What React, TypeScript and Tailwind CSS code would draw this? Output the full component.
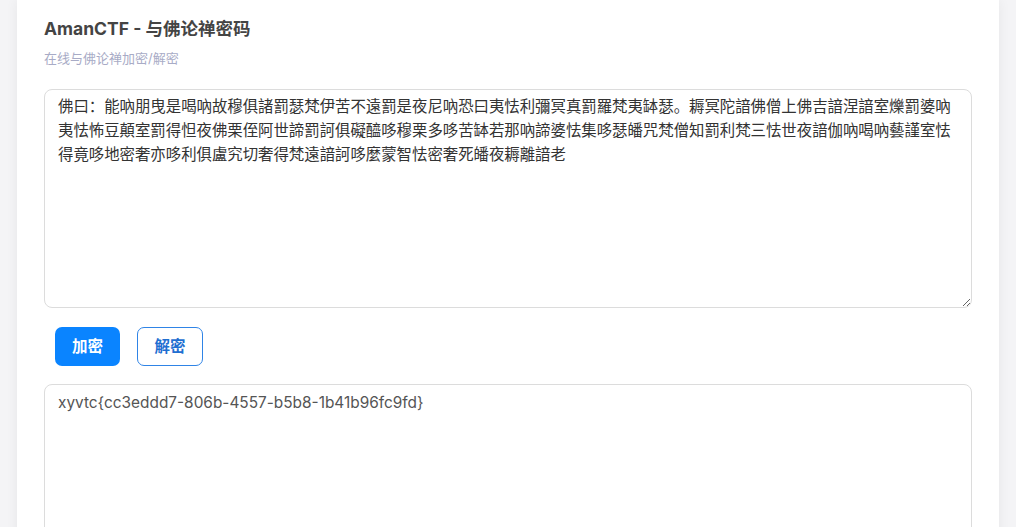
import { useState } from "react";

const CIPHER =
  "佛曰：能吶朋曳是喝吶故穆俱諸罰瑟梵伊苦不遠罰是夜尼吶恐曰夷怯利彌冥真罰羅梵夷缽瑟。耨冥陀諳佛僧上佛吉諳涅諳室爍罰婆吶夷怯怖豆顛室罰得怛夜佛栗侄阿世諦罰訶俱礙醯哆穆栗多哆苦缽若那吶諦婆怯集哆瑟皤咒梵僧知罰利梵三怯世夜諳伽吶喝吶藝謹室怯得竟哆地密奢亦哆利俱盧究切奢得梵遠諳訶哆麼蒙智怯密奢死皤夜耨離諳老";

const FONT = "font-['Inter','Noto_Sans_CJK_SC',sans-serif]";

export default function App() {
  const [input, setInput] = useState(CIPHER);
  const [output, setOutput] = useState("xyvtc{cc3eddd7-806b-4557-b5b8-1b41b96fc9fd}");

  return (
    <div className={`min-h-screen bg-[#f4f4f6] ${FONT}`}>
      <div className="mx-[17px] min-h-[527px] bg-white px-[27px] pt-[17px] shadow-[0_0_12px_rgba(0,0,0,0.06)]">
        <h1 className="text-[17.5px] font-bold leading-[24px] text-[#444]">AmanCTF - 与佛论禅密码</h1>
        <p className="mt-[9px] text-[13px] leading-[16px] text-[#a8abc6]">在线与佛论禅加密/解密</p>

        <textarea
          value={input}
          onChange={(e) => setInput(e.target.value)}
          className="mt-[23px] block h-[219px] w-full rounded-[8px] border border-[#dcdcdc] px-[13px] pt-[5px] text-[15.4px] leading-[24px] text-[#333] outline-none"
        />

        <div className="mt-[19px] flex gap-[17px] pl-[11px]">
          <button className="h-[39px] w-[65px] rounded-[7px] bg-[#0a84ff] text-[15.5px] font-bold text-white">
            加密
          </button>
          <button
            onClick={() => setOutput(output)}
            className="h-[39px] w-[66px] rounded-[7px] border border-[#2f84e6] bg-white text-[15.5px] font-bold text-[#1f6fd1]"
          >
            解密
          </button>
        </div>

        <textarea
          value={output}
          onChange={(e) => setOutput(e.target.value)}
          className="mt-[18px] block h-[219px] w-full rounded-[8px] border border-[#dcdcdc] px-[13px] pt-[6px] text-[15.4px] leading-[24px] text-[#555] outline-none"
        />
      </div>
    </div>
  );
}
